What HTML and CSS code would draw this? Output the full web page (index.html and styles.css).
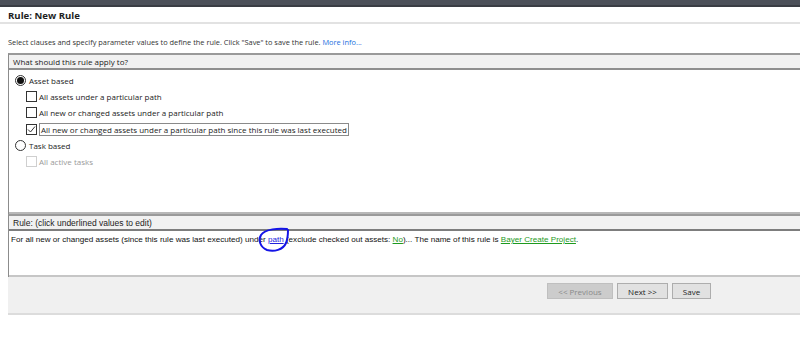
FILE: index.html
```html
<!DOCTYPE html>
<html lang="en">
<head>
    <meta charset="UTF-8">
    <title>Rule: New Rule</title>
    <link rel="stylesheet" href="styles.css">
</head>
<body>
    <div class="titlebar"></div>

    <header class="page-head">
        <h1>Rule: New Rule</h1>
    </header>

    <p class="intro">Select clauses and specify parameter values to define the rule. Click "Save" to save the rule. <a href="#" class="more">More info...</a></p>

    <section class="panel apply">
        <div class="panel-head">What should this rule apply to?</div>
        <div class="panel-body">
            <div class="opt radio-row"><span class="radio on"></span>Asset based</div>
            <div class="opt sub"><span class="check"></span>All assets under a particular path</div>
            <div class="opt sub"><span class="check"></span>All new or changed assets under a particular path</div>
            <div class="opt sub"><span class="check checked"><svg viewBox="0 0 11 11" width="11" height="11"><path d="M2 5.5 L4.5 8 L9 2.5" fill="none" stroke="#333" stroke-width="1"/></svg></span><span class="focus">All new or changed assets under a particular path since this rule was last executed</span></div>
            <div class="opt radio-row"><span class="radio"></span>Task based</div>
            <div class="opt sub disabled"><span class="check"></span>All active tasks</div>
        </div>
    </section>

    <section class="panel rule">
        <div class="panel-head">Rule: (click underlined values to edit)</div>
        <div class="panel-body rule-text">
            For all new or changed assets (since this rule was last executed) under <span class="mark"><a href="#" class="val blue">path</a><svg class="scribble" viewBox="0 0 36 26" width="36" height="26"><path d="M30 2 C22 1 8 2 4 8 C1 13 3 20 10 23 C17 25 26 23 29 16 C31 11 31 6 31 3" fill="none" stroke="#1414e6" stroke-width="2" stroke-linecap="round"/></svg></span> (exclude checked out assets: <a href="#" class="val green">No</a>)... The name of this rule is <a href="#" class="val green">Bayer Create Project</a>.
        </div>
    </section>

    <div class="actions">
        <button class="btn" disabled>&lt;&lt; Previous</button>
        <button class="btn">Next &gt;&gt;</button>
        <button class="btn">Save</button>
    </div>
</body>
</html>
```

FILE: styles.css
```css
* {
    margin: 0;
    padding: 0;
    box-sizing: border-box;
}

body {
    background: #ffffff;
    font-family: "Open Sans", "Noto Sans", sans-serif;
    font-size: 8px;
    color: #222;
    width: 800px;
    height: 346px;
    overflow: hidden;
}

.titlebar {
    height: 7px;
    background: #4c5059;
    border-bottom: 2px solid #3a3d44;
}

.page-head {
    height: 17px;
    padding: 1px 0 0 8px;
    border-bottom: 2px solid #e2e2e2;
}

h1 {
    font-size: 9.6px;
    font-weight: 700;
    line-height: 15px;
    color: #1e1e1e;
}

.intro {
    margin: 12px 0 0 8px;
    font-size: 7.4px;
    line-height: 12px;
    color: #333;
}

.more {
    color: #1a6fe0;
    text-decoration: none;
}

.panel {
    margin-left: 8px;
    border-left: 1px solid #8c8c8c;
    border-top: 2px solid #9a9a9a;
}

.apply {
    margin-top: 5px;
}

.panel-head {
    height: 15px;
    line-height: 14px;
    padding-left: 4px;
    background: #f1f1f1;
    border-bottom: 2px solid #8f8f8f;
}

.apply .panel-body {
    height: 144px;
    padding: 2px 0 0 6px;
    border-bottom: 2px solid #b8b8b8;
}

.opt {
    display: flex;
    align-items: center;
    height: 16.3px;
    color: #222;
}

.opt.sub {
    padding-left: 11px;
}

.radio {
    width: 11px;
    height: 11px;
    border: 1px solid #333;
    border-radius: 50%;
    margin-right: 3px;
    display: flex;
    align-items: center;
    justify-content: center;
}

.radio.on::after {
    content: "";
    width: 7px;
    height: 7px;
    border-radius: 50%;
    background: #111;
}

.check {
    width: 11px;
    height: 11px;
    border: 1px solid #333;
    margin-right: 2px;
    display: flex;
}

.check svg {
    margin: -1px;
}

.focus {
    border: 1px solid #8a8a8a;
    padding: 0 1px;
    line-height: 11px;
}

.disabled {
    color: #9a9a9a;
}

.disabled .check {
    border-color: #cfcfcf;
}

.rule .panel-head {
    font-family: "Liberation Sans", Arial, sans-serif;
    font-size: 8.5px;
    border-bottom: 2px solid #7d7d7d;
}

.rule-text {
    height: 46px;
    padding: 4px 0 0 2px;
    font-family: "Liberation Sans", Arial, sans-serif;
    font-size: 8.1px;
    line-height: 10px;
    color: #111;
    border-bottom: 2px solid #c6c6c6;
}

.val {
    text-decoration: underline;
}

.val.blue {
    color: #2222dd;
}

.val.green {
    color: #1e9a1e;
}

.mark {
    position: relative;
}

.scribble {
    position: absolute;
    left: -11px;
    top: -8px;
}

.actions {
    height: 38px;
    background: #f0f0f0;
    border-bottom: 2px solid #dcdcdc;
    margin-left: 8px;
    display: flex;
    align-items: flex-start;
    gap: 4px;
    padding: 6px 0 0 539px;
}

.btn {
    height: 16px;
    font-family: "Open Sans", "Noto Sans", sans-serif;
    font-size: 8px;
    color: #222;
    background: #e1e1e1;
    border: 1px solid #adadad;
    padding: 0 8px;
    min-width: 39px;
}

.btn:nth-child(1) {
    width: 66px;
}

.btn:nth-child(2) {
    width: 51px;
}

.btn[disabled] {
    background: #cccccc;
    border-color: #bfbfbf;
    color: #8a8a8a;
}
```
